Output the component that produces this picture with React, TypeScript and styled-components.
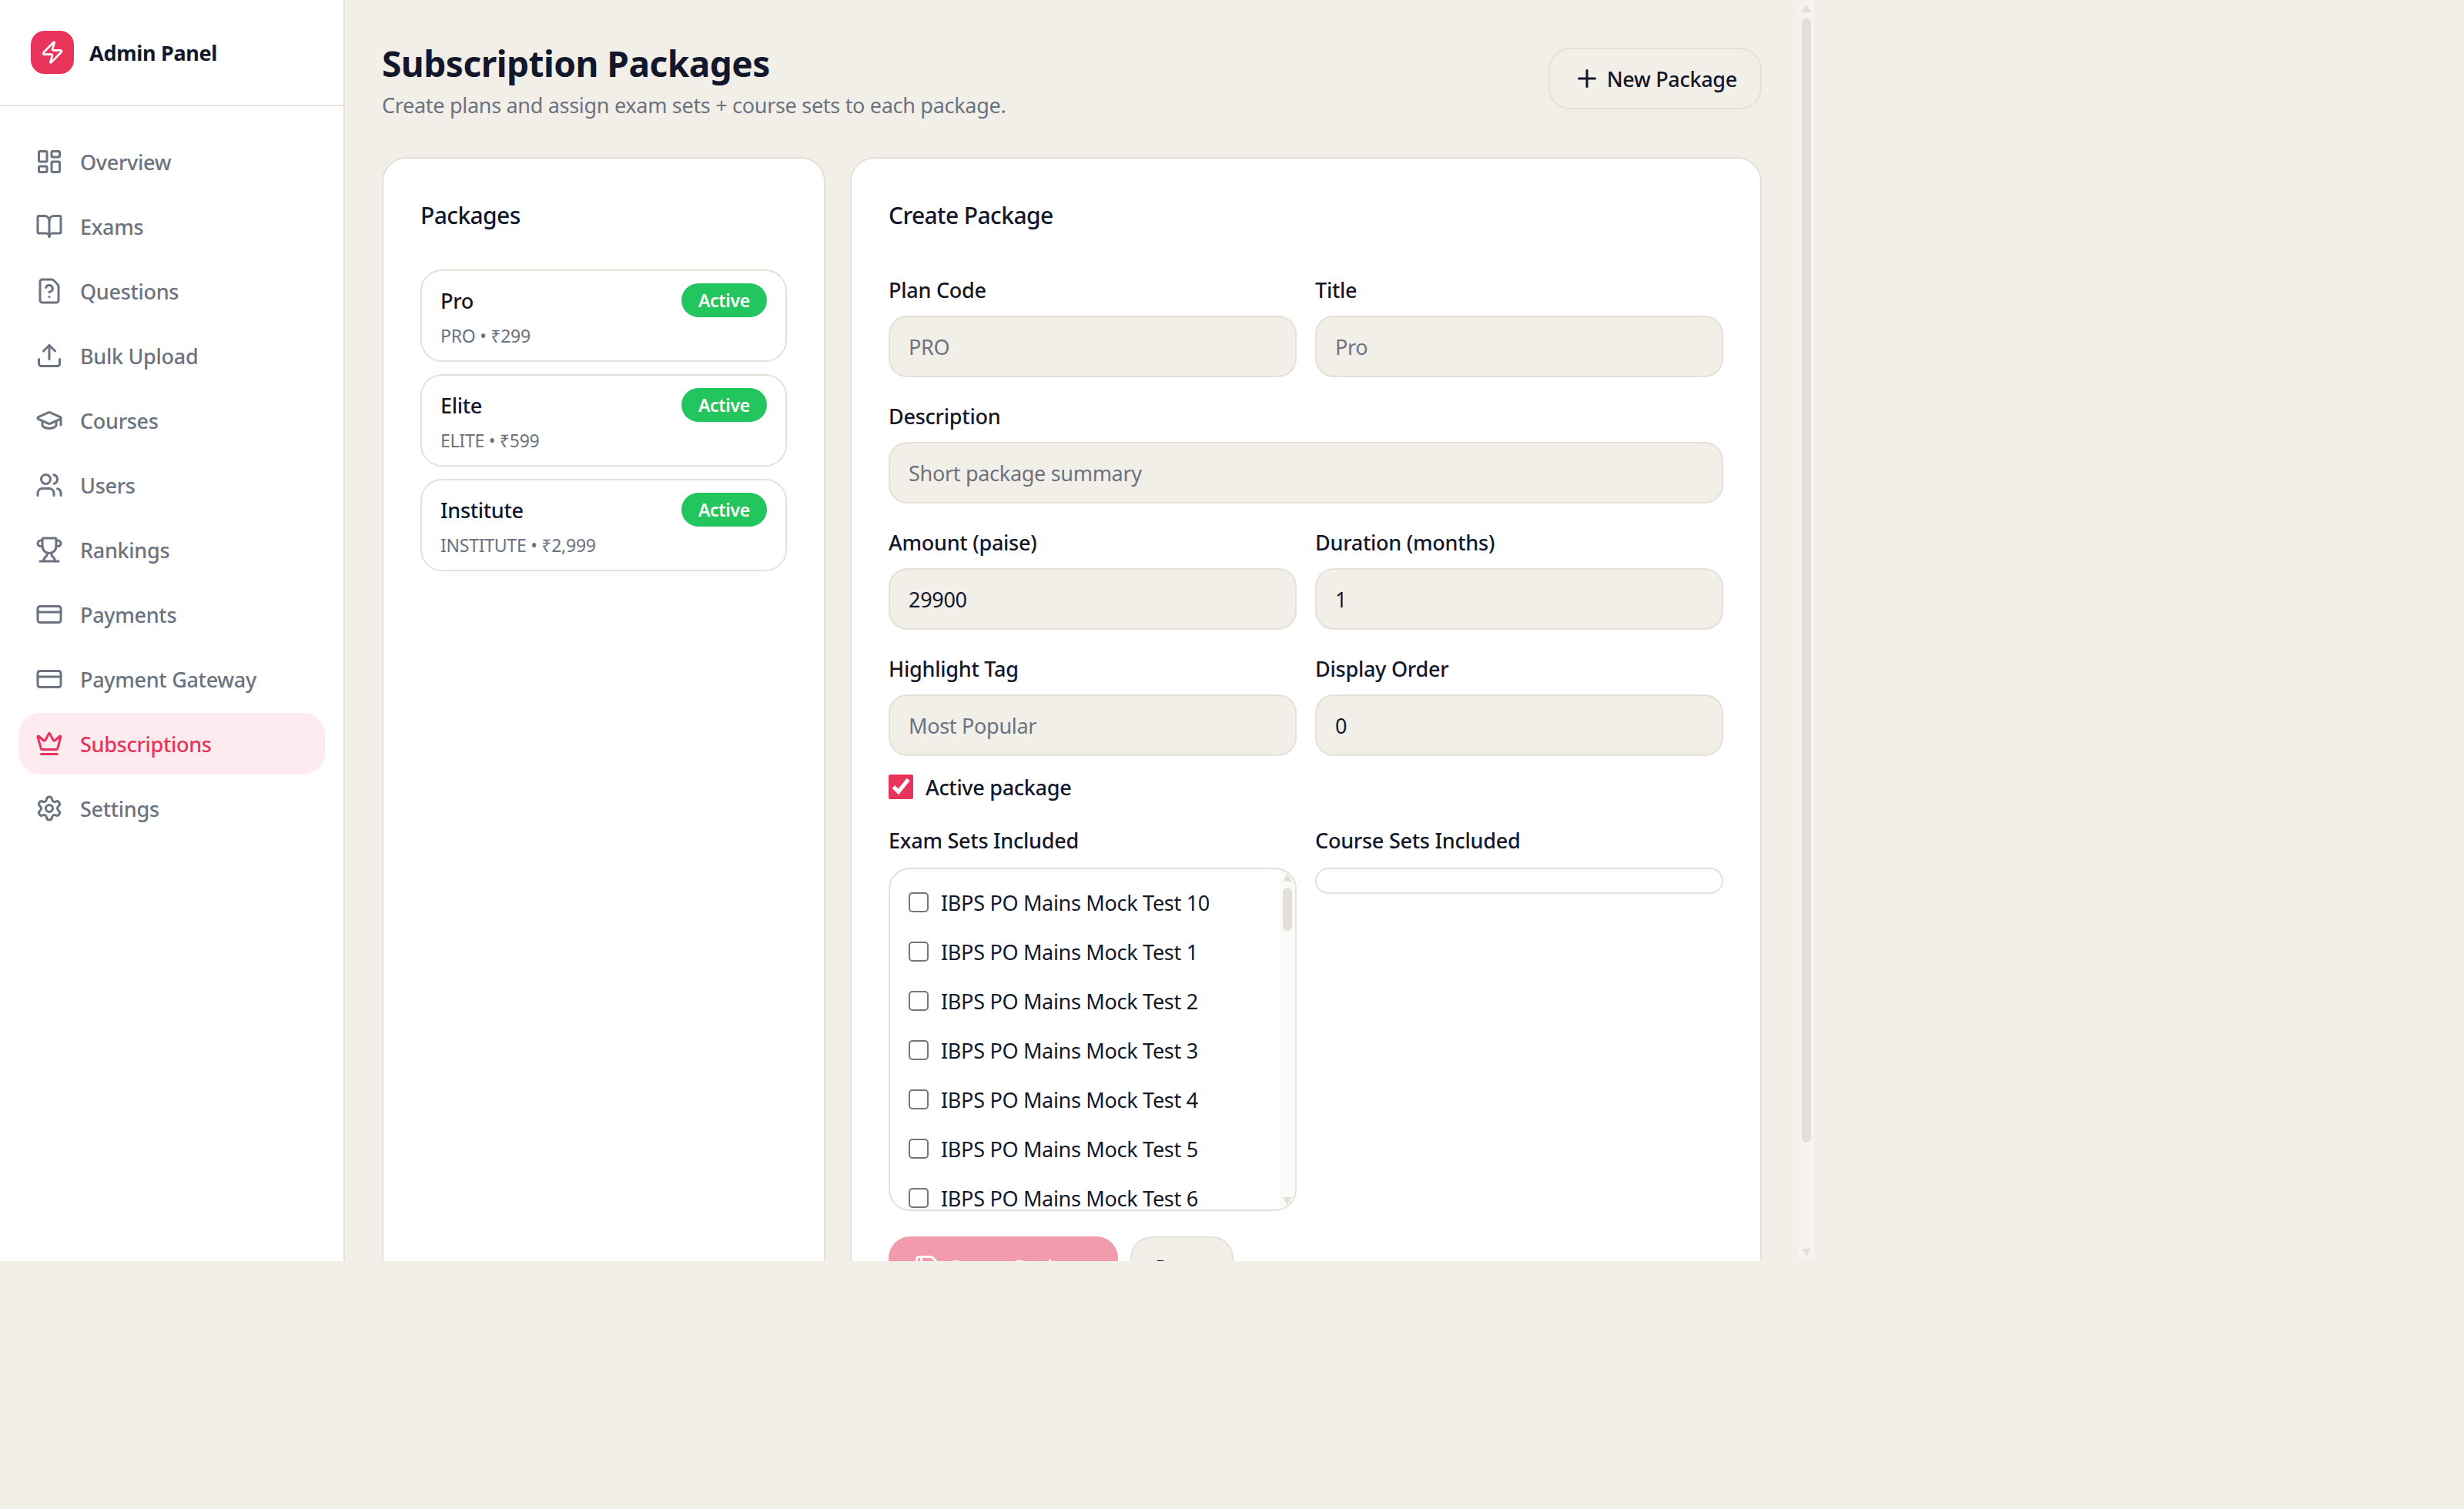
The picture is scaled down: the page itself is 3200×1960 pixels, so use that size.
import React from 'react'
import styled, { createGlobalStyle } from 'styled-components'
import {
  BookOpen,
  CreditCard,
  Crown,
  FileQuestionMark,
  GraduationCap,
  LayoutDashboard,
  Plus,
  Save,
  Settings,
  Trophy,
  Upload,
  Users,
  Zap
} from 'lucide-react'

const rose = '#e8335a'
const line = '#e5e1d8'
const paper = '#f2efe9'
const ink = '#12172b'
const muted = '#6b7280'
const thumb = '#e2dfd8'

const GlobalStyle = createGlobalStyle`
  html, body {
    margin: 0;
    background: ${paper};
    font-family: "Noto Sans", "Open Sans", sans-serif;
    letter-spacing: -0.3px;
    color: ${ink};
  }
  * { box-sizing: border-box; }
`

const AppWrapper = styled.div`
  display: flex;
  width: 2356px;
  height: 1638px;
  overflow: hidden;
`

const Sidebar = styled.aside`
  flex: none;
  width: 448px;
  background: #fff;
  border-right: 2px solid ${line};
`

const Brand = styled.div`
  display: flex;
  align-items: center;
  gap: 20px;
  height: 138px;
  padding: 0 40px;
  border-bottom: 2px solid ${line};
  font-size: 27px;
  font-weight: 700;
`

const BrandMark = styled.span`
  display: flex;
  align-items: center;
  justify-content: center;
  width: 56px;
  height: 56px;
  border-radius: 18px;
  background: ${rose};
  color: #fff;
`

const Nav = styled.nav`
  display: flex;
  flex-direction: column;
  gap: 4px;
  padding: 32px 24px;
`

const NavItem = styled.a<{ $active?: boolean }>`
  display: flex;
  align-items: center;
  gap: 22px;
  height: 80px;
  padding: 0 22px;
  border-radius: 28px;
  font-size: 27px;
  font-weight: 500;
  color: ${p => (p.$active ? rose : muted)};
  background: ${p => (p.$active ? '#feebef' : 'transparent')};
`

const Main = styled.main`
  display: flex;
  flex: 1;
  min-width: 0;
  height: 100%;
`

const Content = styled.div`
  flex: 1;
  min-width: 0;
  padding: 48px;
`

const Rail = styled.div<{ $track: string; $over?: boolean }>`
  display: flex;
  flex: none;
  flex-direction: column;
  align-items: center;
  width: 20px;
  padding: 6px 0;
  background: ${p => p.$track};
  ${p => (p.$over ? 'position: absolute; top: 0; right: 0; bottom: 0;' : '')}
`

const RailArrow = styled.span<{ $down?: boolean }>`
  flex: none;
  width: 12px;
  height: 10px;
  background: ${thumb};
  clip-path: ${p => (p.$down ? 'polygon(0 0, 100% 0, 50% 100%)' : 'polygon(50% 0, 100% 100%, 0 100%)')};
`

const RailThumb = styled.span<{ $height: number }>`
  flex: none;
  width: 12px;
  height: ${p => p.$height}px;
  margin-top: 8px;
  border-radius: 6px;
  background: ${thumb};
`

const RailGap = styled.span`
  flex: 1;
`

const Header = styled.header`
  display: flex;
  align-items: center;
  justify-content: space-between;
  height: 108px;
  margin-bottom: 48px;
`

const Title = styled.h1`
  margin: 0;
  font-size: 46px;
  line-height: 70px;
  font-weight: 700;
  letter-spacing: -0.5px;
`

const Subtitle = styled.p`
  margin: 0;
  font-size: 27px;
  line-height: 40px;
  color: ${muted};
`

const Button = styled.button<{ $primary?: boolean }>`
  display: inline-flex;
  align-items: center;
  justify-content: center;
  gap: 8px;
  height: 80px;
  padding: 0 30px;
  border: 2px solid ${p => (p.$primary ? 'transparent' : line)};
  border-radius: 28px;
  background: ${p => (p.$primary ? '#f29bac' : paper)};
  color: ${p => (p.$primary ? '#fff' : ink)};
  font: 500 27px "Noto Sans", sans-serif;
  letter-spacing: ${p => (p.$primary ? '-0.7px' : '-0.3px')};
`

const Columns = styled.div`
  display: grid;
  grid-template-columns: 576px 1fr;
  gap: 32px;
`

const Card = styled.section`
  padding: 48px;
  background: #fff;
  border: 2px solid ${line};
  border-radius: 32px;
`

const CardTitle = styled.h2<{ $gap: number }>`
  margin: 0 0 ${p => p.$gap}px;
  font-size: 30px;
  line-height: 52px;
  font-weight: 500;
  letter-spacing: -0.6px;
`

const PackageList = styled.div`
  display: flex;
  flex-direction: column;
  gap: 16px;
`

const PackageItem = styled.div`
  height: 120px;
  padding: 16px 24px;
  border: 2px solid ${line};
  border-radius: 28px;
`

const PackageTop = styled.div`
  display: flex;
  align-items: center;
  justify-content: space-between;
  height: 44px;
`

const PackageName = styled.span`
  font-size: 27px;
  font-weight: 500;
`

const Badge = styled.span`
  display: flex;
  align-items: center;
  height: 44px;
  padding: 0 22px;
  border-radius: 22px;
  background: #22c55e;
  color: #fff;
  font-size: 23px;
  font-weight: 600;
`

const PackageMeta = styled.div`
  margin-top: 6px;
  font-size: 23px;
  line-height: 36px;
  letter-spacing: -0.25px;
  color: ${muted};
`

const FormRows = styled.div`
  display: flex;
  flex-direction: column;
  gap: 32px;
`

const TwoCols = styled.div<{ $top?: number }>`
  display: grid;
  grid-template-columns: 530px 530px;
  gap: 24px;
  align-items: start;
  margin-top: ${p => p.$top ?? 0}px;
`

const Field = styled.label`
  display: flex;
  flex-direction: column;
  gap: 14px;
`

const FieldLabel = styled.span`
  font-size: 27px;
  line-height: 38px;
  font-weight: 500;
  letter-spacing: -0.25px;
`

const TextInput = styled.input`
  width: 100%;
  height: 80px;
  padding: 0 24px;
  border: 2px solid ${line};
  border-radius: 24px;
  background: ${paper};
  color: ${ink};
  font: 400 27px "Noto Sans", sans-serif;
  letter-spacing: -0.3px;
  outline: none;

  &::placeholder {
    color: ${muted};
    opacity: 1;
  }
`

const ActiveRow = styled.label`
  display: flex;
  align-items: center;
  gap: 16px;
  height: 40px;
  margin-top: 20px;
  font-size: 27px;
  font-weight: 500;
`

const ActiveBox = styled.input`
  width: 32px;
  height: 32px;
  margin: 0;
  accent-color: ${rose};
`

const SetLabel = styled(FieldLabel)`
  display: block;
  padding-top: 2px;
  margin-bottom: 16px;
`

const CourseBox = styled.div`
  height: 34px;
  border: 2px solid ${line};
  border-radius: 28px;
`

const ExamBox = styled.div`
  position: relative;
  display: flex;
  flex-direction: column;
  gap: 24px;
  height: 446px;
  padding: 23px 24px;
  border: 2px solid ${line};
  border-radius: 28px;
  overflow: hidden;
`

const SetRow = styled.label`
  display: flex;
  flex: none;
  align-items: center;
  gap: 16px;
  height: 40px;
  font-size: 27px;
`

const SetCheck = styled.input`
  flex: none;
  width: 26px;
  height: 26px;
  margin: 0;
  appearance: none;
  background: #fff;
  border: 2px solid #767676;
  border-radius: 5px;
`

const Actions = styled.div`
  display: flex;
  gap: 16px;
  margin-top: 33px;
`

const navItems = [
  { label: 'Overview', Icon: LayoutDashboard },
  { label: 'Exams', Icon: BookOpen },
  { label: 'Questions', Icon: FileQuestionMark },
  { label: 'Bulk Upload', Icon: Upload },
  { label: 'Courses', Icon: GraduationCap },
  { label: 'Users', Icon: Users },
  { label: 'Rankings', Icon: Trophy },
  { label: 'Payments', Icon: CreditCard },
  { label: 'Payment Gateway', Icon: CreditCard },
  { label: 'Subscriptions', Icon: Crown, active: true },
  { label: 'Settings', Icon: Settings }
]

const packages = [
  { name: 'Pro', meta: 'PRO • ₹299' },
  { name: 'Elite', meta: 'ELITE • ₹599' },
  { name: 'Institute', meta: 'INSTITUTE • ₹2,999' }
]

const examSets = [10, 1, 2, 3, 4, 5, 6]

function ScrollRail({ track, height, over }: { track: string; height: number; over?: boolean }) {
  return (
    <Rail $track={track} $over={over}>
      <RailArrow />
      <RailThumb $height={height} />
      <RailGap />
      <RailArrow $down />
    </Rail>
  )
}

export default function App() {
  return (
    <AppWrapper>
      <GlobalStyle />
      <Sidebar>
        <Brand>
          <BrandMark>
            <Zap size={32} />
          </BrandMark>
          Admin Panel
        </Brand>
        <Nav>
          {navItems.map(({ label, Icon, active }) => (
            <NavItem key={label} $active={active}>
              <Icon size={36} />
              {label}
            </NavItem>
          ))}
        </Nav>
      </Sidebar>
      <Main>
        <Content>
          <Header>
            <div>
              <Title>Subscription Packages</Title>
              <Subtitle>Create plans and assign exam sets + course sets to each package.</Subtitle>
            </div>
            <Button>
              <Plus size={36} />
              New Package
            </Button>
          </Header>
          <Columns>
            <Card>
              <CardTitle $gap={44}>Packages</CardTitle>
              <PackageList>
                {packages.map(pkg => (
                  <PackageItem key={pkg.name}>
                    <PackageTop>
                      <PackageName>{pkg.name}</PackageName>
                      <Badge>Active</Badge>
                    </PackageTop>
                    <PackageMeta>{pkg.meta}</PackageMeta>
                  </PackageItem>
                ))}
              </PackageList>
            </Card>
            <Card>
              <CardTitle $gap={52}>Create Package</CardTitle>
              <FormRows>
                <TwoCols>
                  <Field>
                    <FieldLabel>Plan Code</FieldLabel>
                    <TextInput placeholder="PRO" />
                  </Field>
                  <Field>
                    <FieldLabel>Title</FieldLabel>
                    <TextInput placeholder="Pro" />
                  </Field>
                </TwoCols>
                <Field>
                  <FieldLabel>Description</FieldLabel>
                  <TextInput placeholder="Short package summary" />
                </Field>
                <TwoCols>
                  <Field>
                    <FieldLabel>Amount (paise)</FieldLabel>
                    <TextInput defaultValue="29900" />
                  </Field>
                  <Field>
                    <FieldLabel>Duration (months)</FieldLabel>
                    <TextInput defaultValue="1" />
                  </Field>
                </TwoCols>
                <TwoCols>
                  <Field>
                    <FieldLabel>Highlight Tag</FieldLabel>
                    <TextInput placeholder="Most Popular" />
                  </Field>
                  <Field>
                    <FieldLabel>Display Order</FieldLabel>
                    <TextInput defaultValue="0" />
                  </Field>
                </TwoCols>
              </FormRows>
              <ActiveRow>
                <ActiveBox type="checkbox" defaultChecked />
                Active package
              </ActiveRow>
              <TwoCols $top={29}>
                <div>
                  <SetLabel>Exam Sets Included</SetLabel>
                  <ExamBox>
                    {examSets.map(n => (
                      <SetRow key={n}>
                        <SetCheck type="checkbox" />
                        IBPS PO Mains Mock Test {n}
                      </SetRow>
                    ))}
                    <ScrollRail track="#fbfaf8" height={56} over />
                  </ExamBox>
                </div>
                <div>
                  <SetLabel>Course Sets Included</SetLabel>
                  <CourseBox />
                </div>
              </TwoCols>
              <Actions>
                <Button $primary>
                  <Save size={36} />
                  Create Package
                </Button>
                <Button>Reset</Button>
              </Actions>
            </Card>
          </Columns>
        </Content>
        <ScrollRail track="#f5f3ee" height={1460} />
      </Main>
    </AppWrapper>
  )
}
